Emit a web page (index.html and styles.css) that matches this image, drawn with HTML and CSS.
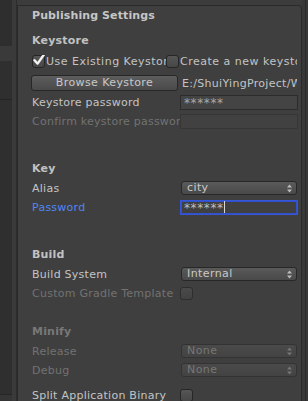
FILE: index.html
```html
<!DOCTYPE html>
<html>
<head>
<meta charset="utf-8">
<link rel="stylesheet" href="styles.css">
</head>
<body>
<div class="app">
  <div class="side">
    <div class="s-top"></div>
    <div class="s-band"></div>
    <div class="s-mid"><span class="s-frag">FILE</span></div>
    <div class="s-low"></div>
    <div class="s-foot"></div>
  </div>
  <div class="gutter"></div>
  <div class="panel">
    <div class="title">Publishing Settings</div>

    <div class="head h-keystore">Keystore</div>
    <div class="chkrow">
      <div class="chkhalf first">
        <span class="cb checked"><svg width="14" height="14" viewBox="0 0 14 14"><path d="M2.5 7.2 L5.6 10.6 L11.8 1.8" fill="none" stroke="#f2f2f2" stroke-width="2.4" stroke-linecap="round" stroke-linejoin="round"/></svg></span>
        <span class="lbl clip">Use Existing Keystore</span>
      </div>
      <div class="chkhalf">
        <span class="cb"></span>
        <span class="lbl clip">Create a new keystore</span>
      </div>
    </div>
    <div class="row browse-row">
      <div class="btn">Browse Keystore</div>
      <div class="path clip">E:/ShuiYingProject/WeiXin</div>
    </div>
    <div class="row">
      <div class="lbl">Keystore password</div>
      <div class="field"><span class="stars">******</span></div>
    </div>
    <div class="row">
      <div class="lbl dim clip">Confirm keystore password</div>
      <div class="field disabled"></div>
    </div>

    <div class="head h-key">Key</div>
    <div class="row">
      <div class="lbl">Alias</div>
      <div class="drop">city<svg class="arr" width="5" height="9" viewBox="0 0 5 9"><path d="M2.5 0.5 L5 3.5 L0 3.5 Z M2.5 8.5 L5 5.5 L0 5.5 Z" fill="#bdbdbd"/></svg></div>
    </div>
    <div class="row">
      <div class="lbl blue">Password</div>
      <div class="field focus"><span class="stars">******</span><span class="caret"></span></div>
    </div>

    <div class="head h-build">Build</div>
    <div class="row">
      <div class="lbl">Build System</div>
      <div class="drop">Internal<svg class="arr" width="5" height="9" viewBox="0 0 5 9"><path d="M2.5 0.5 L5 3.5 L0 3.5 Z M2.5 8.5 L5 5.5 L0 5.5 Z" fill="#bdbdbd"/></svg></div>
    </div>
    <div class="row">
      <div class="lbl dim clip">Custom Gradle Template</div>
      <div><span class="cb dimcb"></span></div>
    </div>

    <div class="head dimhead h-minify">Minify</div>
    <div class="row">
      <div class="lbl dim">Release</div>
      <div class="drop off">None<svg class="arr" width="5" height="9" viewBox="0 0 5 9"><path d="M2.5 0.5 L5 3.5 L0 3.5 Z M2.5 8.5 L5 5.5 L0 5.5 Z" fill="#767676"/></svg></div>
    </div>
    <div class="row">
      <div class="lbl dim">Debug</div>
      <div class="drop off">None<svg class="arr" width="5" height="9" viewBox="0 0 5 9"><path d="M2.5 0.5 L5 3.5 L0 3.5 Z M2.5 8.5 L5 5.5 L0 5.5 Z" fill="#767676"/></svg></div>
    </div>
    <div class="row split-row">
      <div class="lbl clip">Split Application Binary</div>
      <div><span class="cb"></span></div>
    </div>
  </div>
  <div class="rside"></div>
</div>
</body>
</html>
```
FILE: styles.css
```css
* { box-sizing: border-box; }
html, body { margin: 0; padding: 0; background: #3c3c3c; }
body {
  font-family: "DejaVu Sans", Verdana, sans-serif;
  font-size: 11px;
  color: #c4c4c4;
}
.app {
  display: flex;
  width: 308px;
  height: 401px;
  overflow: hidden;
}
.side {
  width: 12px;
  display: flex;
  flex-direction: column;
  background: #2f2f2f;
}
.s-top { height: 46px; background: #2e2e2e; }
.s-band { height: 15px; background: #3a3a3a; }
.s-mid {
  height: 39px;
  background: #2f2f2f;
  border-bottom: 1px solid #242424;
  overflow: hidden;
  display: flex;
  align-items: center;
  color: #bdbdbd;
  font-size: 10px;
}
.s-frag { margin-left: -25px; }
.s-low { flex: 1; background: #2f2f2f; border-bottom: 1px solid #262626; }
.s-foot { height: 6px; background: #353535; }
.gutter {
  width: 5px;
  background: #3a3a3a;
  border-right: 1px solid #2d2d2d;
}
.panel {
  width: 285px;
  margin-top: 5px;
  border: 1px solid #2a2a2a;
  border-bottom: none;
  border-radius: 0 4px 0 0;
  background: #3f3f3f;
  padding: 0 4px 0 14px;
}
.rside {
  width: 6px;
  background: #383838;
  display: flex;
}
.rside::after {
  content: "";
  width: 1px;
  margin-left: 3px;
  background: #2c2c2c;
}
.title {
  height: 20px;
  line-height: 20px;
  font-weight: bold;
  color: #c6c6c6;
  letter-spacing: 0.1px;
}
.head {
  height: 18px;
  line-height: 18px;
  font-weight: bold;
  color: #c2c2c2;
  letter-spacing: 0.2px;
}
.h-keystore { margin-top: 6px; }
.h-key { margin-top: 30px; }
.h-build { margin-top: 30px; }
.h-minify { margin-top: 21px; }
.dimhead { color: #787878; }
.row {
  display: grid;
  grid-template-columns: 148px 117px;
  align-items: center;
  height: 18px;
  margin-top: 1px;
}
.lbl {
  white-space: nowrap;
  color: #c4c4c4;
  letter-spacing: 0.25px;
}
.clip { overflow: hidden; }
.dim { color: #727272; }
.blue { color: #5085f5; }
.chkrow {
  display: flex;
  height: 18px;
  margin-top: 2px;
  align-items: center;
}
.chkhalf {
  display: flex;
  align-items: center;
  overflow: hidden;
  white-space: nowrap;
}
.chkhalf.first { width: 134px; }
.chkhalf:not(.first) { width: 131px; }
.chkhalf .lbl { margin-left: 1px; letter-spacing: 0.5px; }
.cb {
  display: inline-block;
  flex: none;
  width: 13px;
  height: 13px;
  border: 1px solid #262626;
  border-radius: 3px;
  background: linear-gradient(#565656, #474747);
  position: relative;
  vertical-align: middle;
}
.cb.checked svg {
  position: absolute;
  left: -1px;
  top: -3px;
}
.dimcb { background: linear-gradient(#4a4a4a, #424242); border-color: #2e2e2e; }
.browse-row { margin-top: 4px; grid-template-columns: 150px 115px; }
.btn {
  width: 147px;
  margin-left: -1px;
  height: 16px;
  line-height: 14px;
  text-align: center;
  border: 1px solid #272727;
  border-radius: 3px;
  background: linear-gradient(#5d5d5d, #4a4a4a);
  color: #c8c8c8;
  letter-spacing: 0.4px;
  white-space: nowrap;
}
.path {
  white-space: nowrap;
  color: #c4c4c4;
  letter-spacing: 0.3px;
}
.field {
  height: 15px;
  border: 1px solid #2c2c2c;
  background: #444444;
  color: #a8a8a8;
  padding-left: 3px;
  line-height: 14px;
  display: flex;
  align-items: center;
  width: 118px;
}
.stars {
  font-size: 12px;
  letter-spacing: 0.6px;
  line-height: 13px;
  padding-top: 2px;
}
.field.disabled { background: #414141; border-color: #363636; }
.field.focus {
  border: 1px solid #3656d6;
  box-shadow: inset 0 0 0 1px #3050cc;
  background: #404040;
  color: #bfbfbf;
  padding-left: 3px;
}
.caret {
  display: inline-block;
  width: 1px;
  height: 12px;
  background: #d8d8d8;
  margin-left: 0;
}
.drop {
  height: 14px;
  width: 116px;
  margin-left: 1px;
  border: 1px solid #282828;
  border-radius: 3px;
  background: linear-gradient(#5a5a5a, #494949);
  color: #c8c8c8;
  padding-left: 5px;
  line-height: 12px;
  letter-spacing: 0.4px;
  display: flex;
  align-items: center;
  justify-content: space-between;
  padding-right: 4px;
}
.drop.off {
  background: linear-gradient(#4a4a4a, #434343);
  border-color: #333333;
  color: #777777;
}
.split-row { margin-top: 7px; }
```
